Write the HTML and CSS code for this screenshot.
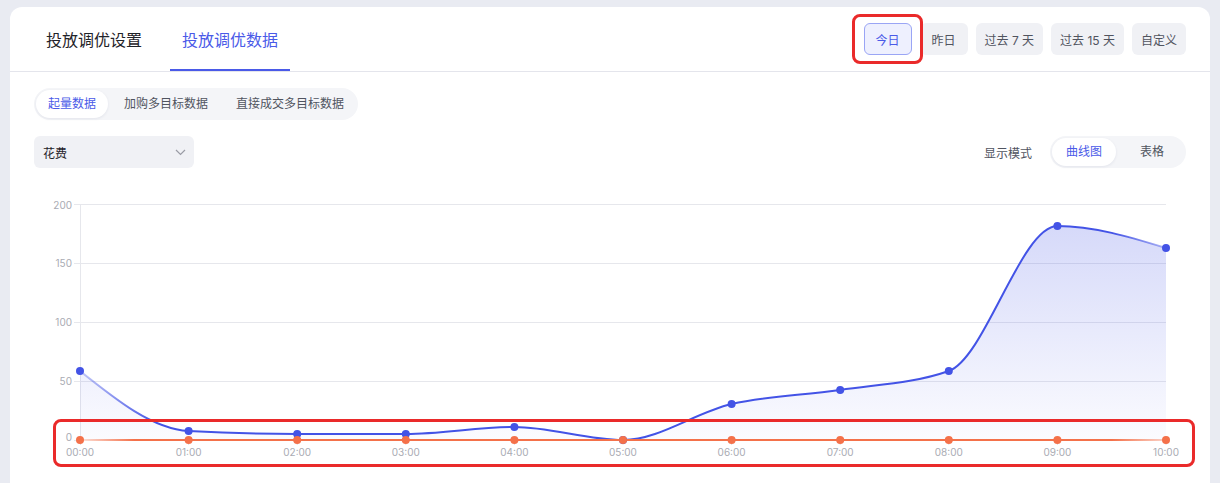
FILE: index.html
```html
<!DOCTYPE html>
<html lang="zh-CN">

<head>
    <title>投放调优数据</title>
    <meta charset="UTF-8">
    <meta name="viewport" content="width=device-width, initial-scale=1.0">
    <link rel="stylesheet" href="styles.css">
</head>

<body>
    <div class="card">
        <div class="card-head">
            <div class="tabs">
                <div class="tab">投放调优设置</div>
                <div class="tab active">投放调优数据</div>
            </div>
            <div class="range">
                <div class="range-item">
                    <button class="active">今日</button>
                    <span class="mark mark-today"></span>
                </div>
                <button>昨日</button>
                <button>过去 7 天</button>
                <button>过去 15 天</button>
                <button>自定义</button>
            </div>
        </div>

        <div class="card-body">
            <div class="segment">
                <span class="segment-item active">起量数据</span>
                <span class="segment-item">加购多目标数据</span>
                <span class="segment-item">直接成交多目标数据</span>
            </div>

            <div class="toolbar">
                <div class="select">
                    <span>花费</span>
                    <svg width="11" height="7" viewBox="0 0 11 7">
                        <path d="M1 1l4.5 4.5L10 1" fill="none" stroke="#9a9ca5" stroke-width="1.2" />
                    </svg>
                </div>
                <div class="mode">
                    <span class="mode-label">显示模式</span>
                    <div class="segment">
                        <span class="segment-item wide active">曲线图</span>
                        <span class="segment-item wide">表格</span>
                    </div>
                </div>
            </div>

            <div class="chart">
                <svg width="1152" height="290" viewBox="34 184 1152 290">
                    <defs>
                        <linearGradient id="areaFill" x1="0" y1="204" x2="0" y2="440" gradientUnits="userSpaceOnUse">
                            <stop offset="0" stop-color="#4353e6" stop-opacity="0.24" />
                            <stop offset="1" stop-color="#4353e6" stop-opacity="0.02" />
                        </linearGradient>
                        <linearGradient id="blueStroke" x1="80" y1="0" x2="1166" y2="0" gradientUnits="userSpaceOnUse">
                            <stop offset="0" stop-color="#4353e6" stop-opacity="0.3" />
                            <stop offset="0.07" stop-color="#4353e6" />
                            <stop offset="0.95" stop-color="#4353e6" />
                            <stop offset="1" stop-color="#4353e6" stop-opacity="0.4" />
                        </linearGradient>
                        <linearGradient id="orangeStroke" x1="80" y1="0" x2="1166" y2="0" gradientUnits="userSpaceOnUse">
                            <stop offset="0" stop-color="#f4714a" stop-opacity="0.2" />
                            <stop offset="0.05" stop-color="#f4714a" />
                            <stop offset="0.95" stop-color="#f4714a" />
                            <stop offset="1" stop-color="#f4714a" stop-opacity="0.3" />
                        </linearGradient>
                    </defs>

                    <!-- grid -->
                    <g class="grid">
                        <line x1="80" y1="204.5" x2="1166" y2="204.5" />
                        <line x1="80" y1="263.5" x2="1166" y2="263.5" />
                        <line x1="80" y1="322.5" x2="1166" y2="322.5" />
                        <line x1="80" y1="381.5" x2="1166" y2="381.5" />
                        <line x1="80.5" y1="204" x2="80.5" y2="440" />
                        <line x1="74" y1="204.5" x2="80" y2="204.5" />
                        <line x1="74" y1="263.5" x2="80" y2="263.5" />
                        <line x1="74" y1="322.5" x2="80" y2="322.5" />
                        <line x1="74" y1="381.5" x2="80" y2="381.5" />
                        <line x1="74" y1="440.5" x2="80" y2="440.5" />
                    </g>
                    <g class="ticks">
                        <line x1="80.5" y1="440" x2="80.5" y2="445" />
                        <line x1="188.6" y1="440" x2="188.6" y2="445" />
                        <line x1="297.2" y1="440" x2="297.2" y2="445" />
                        <line x1="405.8" y1="440" x2="405.8" y2="445" />
                        <line x1="514.4" y1="440" x2="514.4" y2="445" />
                        <line x1="623" y1="440" x2="623" y2="445" />
                        <line x1="731.6" y1="440" x2="731.6" y2="445" />
                        <line x1="840.2" y1="440" x2="840.2" y2="445" />
                        <line x1="948.8" y1="440" x2="948.8" y2="445" />
                        <line x1="1057.4" y1="440" x2="1057.4" y2="445" />
                        <line x1="1166" y1="440" x2="1166" y2="445" />
                    </g>

                    <g class="axis-y">
                        <text x="72" y="209">200</text>
                        <text x="72" y="267">150</text>
                        <text x="72" y="326">100</text>
                        <text x="72" y="385">50</text>
                        <text x="72" y="441">0</text>
                    </g>
                    <g class="axis-x">
                        <text x="80" y="456">00:00</text>
                        <text x="188.6" y="456">01:00</text>
                        <text x="297.2" y="456">02:00</text>
                        <text x="405.8" y="456">03:00</text>
                        <text x="514.4" y="456">04:00</text>
                        <text x="623" y="456">05:00</text>
                        <text x="731.6" y="456">06:00</text>
                        <text x="840.2" y="456">07:00</text>
                        <text x="948.8" y="456">08:00</text>
                        <text x="1057.4" y="456">09:00</text>
                        <text x="1166" y="456">10:00</text>
                    </g>

                    <!-- 花费 -->
                    <path fill="url(#areaFill)" d="M80,371 C116.2,400 152.4,429 188.6,431 C224.8,433 261,434 297.2,434 C333.4,434 369.6,434 405.8,434 C442,434 478.2,427 514.4,427 C550.6,427 586.8,440 623,440 C659.2,440 695.4,412.3 731.6,404 C767.8,395.7 804,395.5 840.2,390 C876.4,384.5 912.6,383.7 948.8,371 C985,358.3 1021.2,226 1057.4,226 C1093.6,226 1129.8,237 1166,248 L1166,440 L80,440 Z" />
                    <path fill="none" stroke="url(#blueStroke)" stroke-width="2" d="M80,371 C116.2,400 152.4,429 188.6,431 C224.8,433 261,434 297.2,434 C333.4,434 369.6,434 405.8,434 C442,434 478.2,427 514.4,427 C550.6,427 586.8,440 623,440 C659.2,440 695.4,412.3 731.6,404 C767.8,395.7 804,395.5 840.2,390 C876.4,384.5 912.6,383.7 948.8,371 C985,358.3 1021.2,226 1057.4,226 C1093.6,226 1129.8,237 1166,248" />

                    <path fill="none" stroke="url(#orangeStroke)" stroke-width="2" d="M80,440 H1166" />

                    <g fill="#4353e6">
                        <circle cx="80" cy="371" r="4" />
                        <circle cx="188.6" cy="431" r="4" />
                        <circle cx="297.2" cy="434" r="4" />
                        <circle cx="405.8" cy="434" r="4" />
                        <circle cx="514.4" cy="427" r="4" />
                        <circle cx="623" cy="440" r="4" />
                        <circle cx="731.6" cy="404" r="4" />
                        <circle cx="840.2" cy="390" r="4" />
                        <circle cx="948.8" cy="371" r="4" />
                        <circle cx="1057.4" cy="226" r="4" />
                        <circle cx="1166" cy="248" r="4" />
                    </g>
                    <g fill="#f4714a">
                        <circle cx="80" cy="440" r="4" />
                        <circle cx="188.6" cy="440" r="4" />
                        <circle cx="297.2" cy="440" r="4" />
                        <circle cx="405.8" cy="440" r="4" />
                        <circle cx="514.4" cy="440" r="4" />
                        <circle cx="623" cy="440" r="4" />
                        <circle cx="731.6" cy="440" r="4" />
                        <circle cx="840.2" cy="440" r="4" />
                        <circle cx="948.8" cy="440" r="4" />
                        <circle cx="1057.4" cy="440" r="4" />
                        <circle cx="1166" cy="440" r="4" />
                    </g>
                </svg>
                <span class="mark mark-axis"></span>
            </div>
        </div>
    </div>
</body>

</html>
```

FILE: styles.css
```css
body {
    margin: 0;
    padding: 7px 10px 0;
    height: 100vh;
    box-sizing: border-box;
    overflow: hidden;
    font-family: Inter, "Noto Sans CJK SC", sans-serif;
    background-color: #e9ebf2;
    color: #1f2329;
}

.card {
    height: 100%;
    background-color: #fff;
    border-radius: 12px 12px 0 0;
}

.card-head {
    display: flex;
    justify-content: space-between;
    align-items: center;
    height: 64px;
    padding: 0 24px;
    border-bottom: 1px solid #e4e5ec;
}

.tabs {
    display: flex;
    gap: 16px;
    height: 100%;
}

.tab {
    position: relative;
    display: flex;
    align-items: center;
    padding: 0 12px;
    font-size: 16px;
    color: #1f2329;
}

.tab.active {
    color: #4a5ae8;
}

.tab.active::after {
    content: "";
    position: absolute;
    left: 0;
    right: 0;
    bottom: 0;
    height: 2px;
    background-color: #4a5ae8;
}

.range {
    display: flex;
    gap: 8px;
}

.range-item {
    position: relative;
    display: flex;
}

.range button {
    height: 32px;
    min-width: 48px;
    padding: 0 8px;
    border: 1px solid transparent;
    border-radius: 6px;
    background-color: #f0f1f5;
    font-family: inherit;
    font-size: 12px;
    color: #50545f;
}

.range button.active {
    background-color: #eef0fe;
    border-color: #9aa5f5;
    color: #4a5ae8;
}

.mark {
    position: absolute;
    box-sizing: border-box;
    border: 3px solid #ea2a2a;
    border-radius: 8px;
    pointer-events: none;
}

.mark-today {
    left: -12px;
    top: -9px;
    width: 71px;
    height: 50px;
}

.card-body {
    padding: 16px 24px 0;
}

.segment {
    display: inline-flex;
    gap: 4px;
    padding: 2px;
    border-radius: 16px;
    background-color: #f4f5f8;
}

.segment-item {
    height: 28px;
    line-height: 28px;
    padding: 0 12px;
    border-radius: 14px;
    font-size: 12px;
    color: #50545f;
}

.segment-item.wide {
    width: 64px;
    padding: 0;
    text-align: center;
}

.segment-item.active {
    background-color: #fff;
    color: #4a5ae8;
    box-shadow: 0 1px 3px rgba(30, 40, 90, 0.08);
}

.toolbar {
    display: flex;
    justify-content: space-between;
    align-items: center;
    margin-top: 16px;
}

.select {
    display: flex;
    justify-content: space-between;
    align-items: center;
    box-sizing: border-box;
    width: 160px;
    height: 32px;
    padding: 0 8px 0 9px;
    border-radius: 6px;
    background-color: #f0f1f5;
    font-size: 12px;
    color: #1f2329;
}

.mode {
    display: flex;
    align-items: center;
    gap: 18px;
}

.mode-label {
    font-size: 12px;
    color: #50545f;
}

.chart {
    position: relative;
    margin-top: 16px;
}

.chart svg {
    display: block;
    overflow: visible;
}

.grid line {
    stroke: #e6e7ec;
    stroke-width: 1;
}

.ticks line {
    stroke: #e0e1e6;
    stroke-width: 1;
}

.axis-y text,
.axis-x text {
    font-family: Inter, "Noto Sans", sans-serif;
    font-size: 10px;
    fill: #a9abb3;
}

.axis-y text {
    text-anchor: end;
}

.axis-x text {
    text-anchor: middle;
}

.mark-axis {
    left: 19px;
    top: 235px;
    width: 1142px;
    height: 48px;
}
```
